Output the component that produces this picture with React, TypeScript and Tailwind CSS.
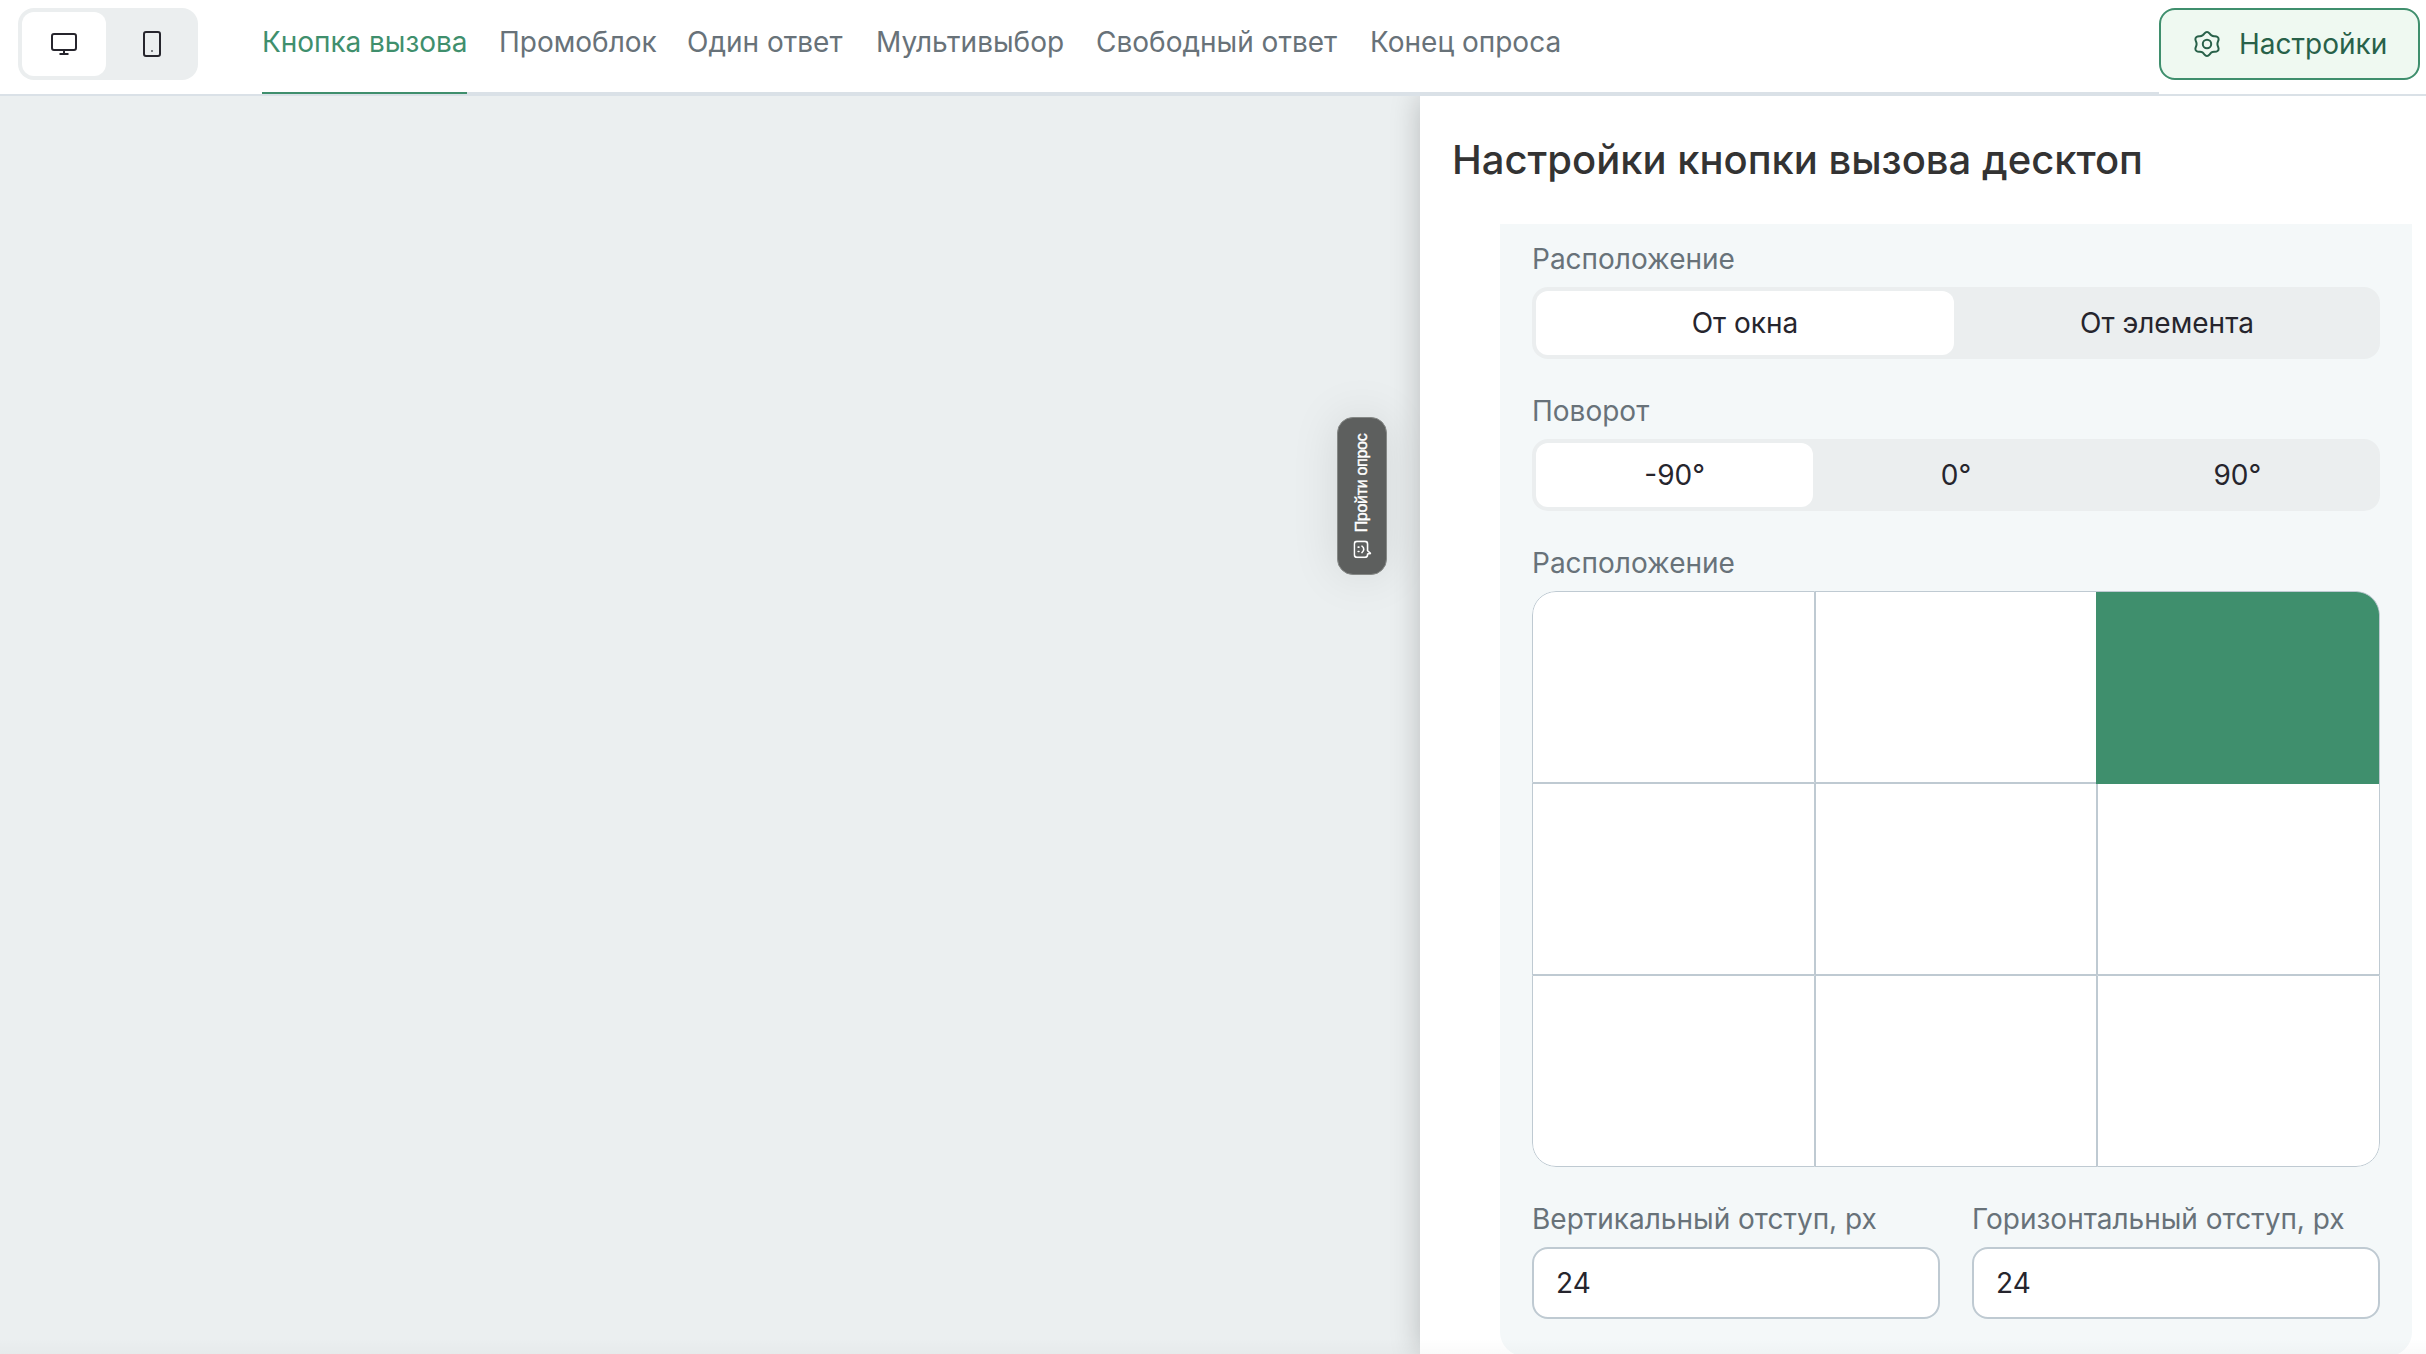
const tabs = [
  { title: "Кнопка вызова", width: "w-[205px]" },
  { title: "Промоблок", width: "w-[156px]" },
  { title: "Один ответ", width: "w-[157px]" },
  { title: "Мультивыбор", width: "w-[188px]" },
  { title: "Свободный ответ", width: "w-[242px]" },
  { title: "Конец опроса", width: "w-[191px]" },
];

function MonitorIcon() {
  return (
    <svg width="32" height="32" viewBox="0 0 32 32" fill="none" stroke="#26252d" strokeWidth="2">
      <rect x="4" y="6" width="24" height="16" rx="2" />
      <path d="M16 22v4M11.5 26h9" />
    </svg>
  );
}

function PhoneIcon() {
  return (
    <svg width="32" height="32" viewBox="0 0 32 32" fill="none" stroke="#26252d" strokeWidth="2">
      <rect x="8" y="4" width="16" height="24" rx="2" />
      <rect x="15" y="22" width="2" height="2" fill="#7c7f83" stroke="none" />
    </svg>
  );
}

function GearIcon() {
  return (
    <svg width="32" height="32" viewBox="0 0 32 32" fill="none" stroke="#286149" strokeWidth="2" strokeLinejoin="round">
      <circle cx="16" cy="16" r="4.2" />
      <path d="M13.6 5.3C14.8 3.6 17.2 3.6 18.4 5.3C19.6 7.2 20.9 8.4 23.4 8.2C25.9 8 27.9 9.3 27.6 11.5C27.4 13.2 26.4 14 26.4 16C26.4 18 27.4 18.8 27.6 20.5C27.9 22.7 25.9 24 23.4 23.8C20.9 23.6 19.6 24.8 18.4 26.7C17.2 28.4 14.8 28.4 13.6 26.7C12.4 24.8 11.1 23.6 8.6 23.8C6.1 24 4.1 22.7 4.4 20.5C4.6 18.8 5.6 18 5.6 16C5.6 14 4.6 13.2 4.4 11.5C4.1 9.3 6.1 8 8.6 8.2C11.1 8.4 12.4 7.2 13.6 5.3Z" />
    </svg>
  );
}

function SmileIcon() {
  return (
    <svg width="18" height="18" viewBox="0 0 18 18" fill="none" stroke="white" strokeWidth="1.6" strokeLinejoin="round" strokeLinecap="round">
      <path d="M3.6 1h10.8a2.6 2.6 0 0 1 2.6 2.6v8a2.6 2.6 0 0 1-2.6 2.6H7.600L5 17.200 4.400 14.200H3.600A2.6 2.6 0 0 1 1 11.600V3.600A2.6 2.6 0 0 1 3.600 1Z" />
      <path d="M6.800 4.800v.8M11.200 4.800v.8M5.800 8.600c1.600 2.400 4.800 2.400 6.400 0" />
    </svg>
  );
}

function Segmented({ items, label }: { items: string[]; label: string }) {
  return (
    <div className="mb-8">
      <div className="mb-2 h-10 leading-10 text-[#687279]">{label}</div>
      <div className="flex h-18 gap-1 rounded-2xl bg-[#ebeeef] p-1">
        {items.map((t, i) => (
          <button key={t} className={i === 0 ? "flex-1 basis-0 rounded-[12px] bg-white" : "flex-1 basis-0 rounded-[12px]"}>
            {t}
          </button>
        ))}
      </div>
    </div>
  );
}

function NumberField({ label }: { label: string }) {
  return (
    <label className="block flex-1">
      <span className="mb-2 block h-10 leading-10 whitespace-nowrap text-[#687279]">{label}</span>
      <input defaultValue="24" className="block h-18 w-full rounded-2xl border-2 border-[#bfcad2] bg-white px-[22px] outline-none" />
    </label>
  );
}

export default function App() {
  return (
    <div className="relative flex h-[1354px] w-[2426px] flex-col overflow-hidden bg-white font-['Inter',sans-serif] text-[28px] text-[#26252d]">
      <header className="flex h-24 shrink-0 border-b-2 border-[#dae1e7] pl-[18px]">
        <div className="mt-2 flex h-18 w-[180px] gap-1 rounded-2xl bg-[#ebeeef] p-1">
          <div className="flex flex-1 items-center justify-center rounded-[12px] bg-white"><MonitorIcon /></div>
          <div className="flex flex-1 items-center justify-center"><PhoneIcon /></div>
        </div>
        <nav className="ml-16 flex w-[1897px] gap-8 border-b-2 border-[#dae1e7] text-[#687279]">
          {tabs.map(({ title, width }, i) => (
            <div key={title} className={width}>
              <div
                className={i === 0
                  ? "h-[94px] border-b-2 border-[#3f8f6d] leading-[84px] tracking-[-0.05px] whitespace-nowrap text-[#3f8f6d]"
                  : "leading-[84px] whitespace-nowrap"}
              >
                {title}
              </div>
            </div>
          ))}
        </nav>
        <button className="mt-2 flex h-18 w-[261px] items-center rounded-2xl border-2 border-[#3f8f6d] bg-[#eff9f1] pl-[30px] text-[#286149]">
          <GearIcon />
          <span className="ml-4">Настройки</span>
        </button>
      </header>
      <main className="flex min-h-0 flex-1">
        <section className="flex flex-1 justify-end overflow-hidden bg-[#ebeff0] pt-[321px] pr-[33px]">
          <div className="flex h-[158px] w-[50px] items-center justify-center rounded-2xl border border-[#858886] bg-[#5d5f5e] shadow-[0_0_48px_rgba(0,0,0,0.1)]">
            <div className="flex shrink-0 -rotate-90 items-center gap-2 font-['Liberation_Sans',Arial,sans-serif] text-[16px] tracking-[-0.3px] whitespace-nowrap text-white [-webkit-text-stroke:0.4px_white]">
              <SmileIcon />
              Пройти опрос
            </div>
          </div>
        </section>
        <aside className="relative w-[1006px] bg-white pl-8 shadow-[0_0_28px_rgba(0,0,0,0.22)] [clip-path:inset(0_0_0_-60px)]">
          <h1 className="h-32 pt-10 text-[40px] leading-12 font-medium text-[#333333]">Настройки кнопки вызова десктоп</h1>
          <div className="ml-12 h-[1132px] w-[912px] rounded-b-3xl bg-[#f4f8f9] px-8 pt-[15px]">
            <Segmented label="Расположение" items={["От окна", "От элемента"]} />
            <Segmented label="Поворот" items={["-90°", "0°", "90°"]} />
            <div className="mb-2 h-10 leading-10 text-[#687279]">Расположение</div>
            <div className="grid h-[576px] grid-cols-3 grid-rows-3 overflow-hidden rounded-3xl">
              <div className="rounded-tl-3xl border border-[#bfcad2] bg-white" />
              <div className="border border-[#bfcad2] bg-white" />
              <div className="z-10 -mb-px -ml-px rounded-tr-3xl border-t border-r border-[#bfcad2] bg-[#3f8f6d]" />
              <div className="border border-[#bfcad2] bg-white" />
              <div className="border border-[#bfcad2] bg-white" />
              <div className="border border-[#bfcad2] bg-white" />
              <div className="rounded-bl-3xl border border-[#bfcad2] bg-white" />
              <div className="border border-[#bfcad2] bg-white" />
              <div className="rounded-br-3xl border border-[#bfcad2] bg-white" />
            </div>
            <div className="mt-8 flex gap-8">
              <NumberField label="Вертикальный отступ, px" />
              <NumberField label="Горизонтальный отступ, px" />
            </div>
          </div>
        </aside>
      </main>
      <div className="pointer-events-none absolute inset-x-0 bottom-0 h-4 bg-gradient-to-b from-transparent to-black/[0.02]" />
    </div>
  );
}
